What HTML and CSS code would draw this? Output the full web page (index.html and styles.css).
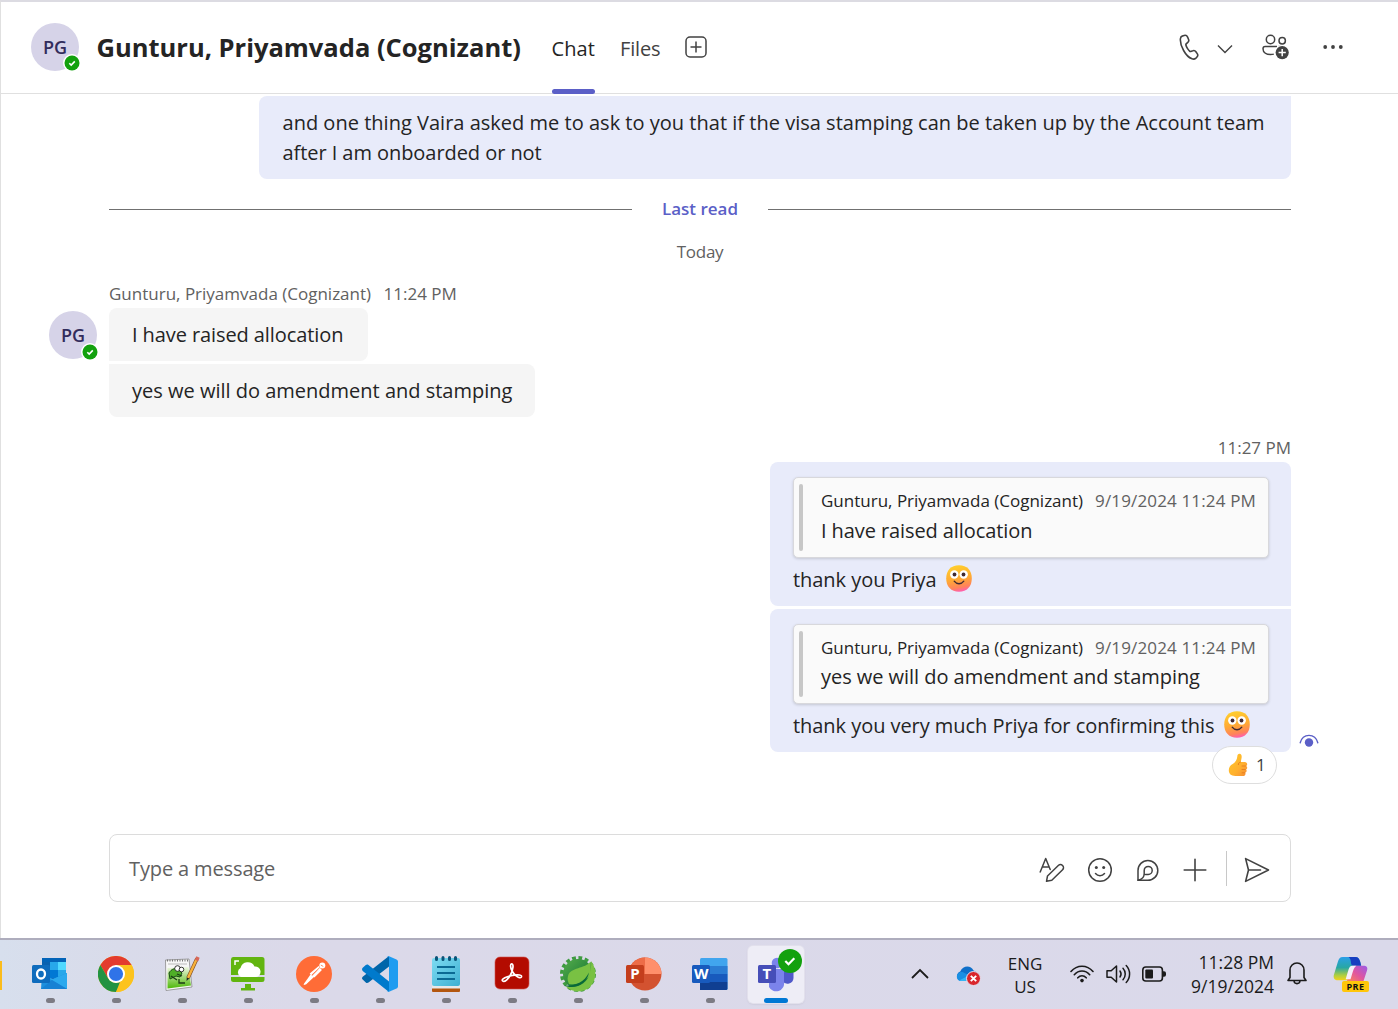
FILE: index.html
```
<!DOCTYPE html>
<html lang="en">
<head>
<meta charset="utf-8">
<title>Chat</title>
<link rel="stylesheet" href="styles.css">
</head>
<body>
<div class="screen">
  <header class="chat-header">
    <div class="avatar"><span class="initials">PG</span>
      <svg class="presence" viewBox="0 0 18 18"><circle cx="9" cy="9" r="9" fill="#fff"/><circle cx="9" cy="9" r="7.5" fill="#13a10e"/><path d="M6.3 9.2l1.9 1.9 3.6-3.7" fill="none" stroke="#fff" stroke-width="1.6"/></svg>
    </div>
    <h1 class="title"><span>Gunturu, Priyamvada (Cognizant)</span></h1>
    <nav class="tabs">
      <a class="tab active"><span>Chat</span></a>
      <a class="tab"><span>Files</span></a>
      <svg class="add-tab" viewBox="0 0 22 22" fill="none" stroke="#424242" stroke-width="1.5"><rect x="1" y="1" width="20" height="20" rx="4"/><path d="M11 5.5v11M5.5 11h11"/></svg>
    </nav>
    <div class="actions">
      <svg width="20" height="26" viewBox="0 0 20 26" fill="none" stroke="#424242" stroke-width="1.6" stroke-linejoin="round"><path d="M3.6 1.9l1.5-.5c1.500-.4 2.900.3 3.500 1.700l.9 2.100c.5 1.100.2 2.400-.7 3.200L7.200 9.900c-.3.3-.4.700-.3 1.100.3 1.300.8 2.300 1.500 3.400.7 1.100 1.300 1.900 2.200 2.700.3.3.7.4 1.100.3l2.200-.7c1.100-.4 2.300 0 3 1l1.300 1.900c.8 1.200.7 2.600-.4 3.600l-.9.9c-1 .9-2.500 1.200-3.900.7-3.200-1.200-6.100-4.100-8.400-8.300C2.100 12.200 1.100 8.200 1.400 4.800 1.500 3.300 2.300 2.200 3.600 1.900z"/></svg>
      <svg class="chev" width="16" height="10" viewBox="0 0 16 10" fill="none" stroke="#424242" stroke-width="1.4"><path d="M1 1.500l7 7 7-7"/></svg>
      <svg class="people" width="28" height="26" viewBox="0 0 28 26" fill="none" stroke="#424242" stroke-width="1.5"><circle cx="8.500" cy="5.500" r="4.200"/><circle cx="20.200" cy="6.700" r="3.200"/><path d="M15 12.500H3.200A2.200 2.200 0 0 0 1 14.700c0 4 3.600 5.800 7.500 5.800 1.200 0 2.300-.1 3.300-.4M16.500 12.500h4"/><circle cx="20.200" cy="18.600" r="7.500" fill="#fff" stroke="none"/><circle cx="20.200" cy="18.600" r="6.600" fill="#424242" stroke="none"/><path d="M20.200 15v7.200M16.600 18.600h7.200" stroke="#fff"/></svg>
      <svg class="more" width="20" height="4" viewBox="0 0 20 4" fill="#424242"><circle cx="2.200" cy="2" r="1.900"/><circle cx="10" cy="2" r="1.900"/><circle cx="17.800" cy="2" r="1.900"/></svg>
    </div>
  </header>

  <main class="messages">
    <div class="bubble mine first"><span class="l1">and one thing Vaira asked me to ask to you that if the visa stamping can be taken up by the Account team</span><br><span class="l2">after I am onboarded or not</span></div>
    <div class="last-read"><span>Last read</span></div>
    <div class="day"><span>Today</span></div>
    <div class="meta"><span class="name">Gunturu, Priyamvada (Cognizant)</span><span class="time">11:24 PM</span></div>
    <section class="incoming">
      <div class="avatar"><span class="initials">PG</span>
        <svg class="presence" viewBox="0 0 18 18"><circle cx="9" cy="9" r="9" fill="#fff"/><circle cx="9" cy="9" r="7.5" fill="#13a10e"/><path d="M6.3 9.2l1.9 1.9 3.6-3.7" fill="none" stroke="#fff" stroke-width="1.6"/></svg>
      </div>
      <div class="stack">
        <div class="bubble theirs top"><span class="short">I have raised allocation</span></div>
        <div class="bubble theirs bottom"><span>yes we will do amendment and stamping</span></div>
      </div>
    </section>
    <section class="outgoing">
      <div class="meta right"><span class="time">11:27 PM</span></div>
      <div class="bubble mine reply r1">
        <blockquote class="quote q1"><div class="qmeta"><span class="name">Gunturu, Priyamvada (Cognizant)</span><span class="date">9/19/2024 11:24 PM</span></div><div class="qtext"><span class="short">I have raised allocation</span></div></blockquote>
        <div class="rtext"><span>thank you Priya</span>
          <svg class="smile" viewBox="0 0 26 27"><defs><linearGradient id="face" x1="0.3" y1="0" x2="0.5" y2="1"><stop offset="0" stop-color="#ffd02c"/><stop offset=".55" stop-color="#ffa835"/><stop offset=".85" stop-color="#ff825c"/><stop offset="1" stop-color="#ff5fae"/></linearGradient></defs><path d="M13 .3C21 .3 25.800 5.500 25.800 13.500S21 26.700 13 26.700.2 21.500.2 13.500 5 .3 13 .3z" fill="url(#face)"/><circle cx="8.300" cy="9.500" r="4.200" fill="#fff"/><circle cx="17.700" cy="9.500" r="4.200" fill="#fff"/><circle cx="8.500" cy="9.500" r="1.900" fill="#402a32"/><circle cx="17.500" cy="9.500" r="1.900" fill="#402a32"/><path d="M8.200 16.200c2.500 3.300 7.100 3.300 9.600 0" fill="none" stroke="#402a32" stroke-width="1.4" stroke-linecap="round"/></svg>
        </div>
      </div>
      <div class="bubble mine reply r2">
        <blockquote class="quote q2"><div class="qmeta"><span class="name">Gunturu, Priyamvada (Cognizant)</span><span class="date">9/19/2024 11:24 PM</span></div><div class="qtext"><span>yes we will do amendment and stamping</span></div></blockquote>
        <div class="rtext"><span>thank you very much Priya for confirming this</span>
          <svg class="smile" viewBox="0 0 26 27"><path d="M13 .3C21 .3 25.800 5.500 25.800 13.500S21 26.700 13 26.700.2 21.500.2 13.500 5 .3 13 .3z" fill="url(#face)"/><circle cx="8.300" cy="9.500" r="4.200" fill="#fff"/><circle cx="17.700" cy="9.500" r="4.200" fill="#fff"/><circle cx="8.500" cy="9.500" r="1.900" fill="#402a32"/><circle cx="17.500" cy="9.500" r="1.900" fill="#402a32"/><path d="M8.200 16.200c2.500 3.300 7.100 3.300 9.600 0" fill="none" stroke="#402a32" stroke-width="1.4" stroke-linecap="round"/></svg>
        </div>
        <div class="reaction">
          <svg width="20" height="24" viewBox="0 0 20 24"><defs><linearGradient id="thumb" x1="0" y1="0" x2="1" y2="1"><stop offset="0" stop-color="#ffc928"/><stop offset=".6" stop-color="#ffb02e"/><stop offset="1" stop-color="#f58b35"/></linearGradient></defs><path d="M11.600.7c1.800.2 2.300 2 2 4L12.800 9h4c3 .3 2.800 3.600 1.400 4 1.500.8 1.300 3-.2 3.500 1.100.8.7 2.900-.7 3.200.7 1.300-.2 3.300-2.200 3.300H7.300C3 23 .8 20.800.8 17.300c0-3 1.500-4.900 3.900-6.200C7.500 9.300 9 6.800 9.300 3.500 9.400 1.500 10.200.6 11.600.7z" fill="url(#thumb)"/><path d="M17.900 13h-4.300M17.600 16.500h-4M17 19.800h-3.300M12.800 9c-1.800.3-2.600 1.500-2.400 3" fill="none" stroke="#e8811f" stroke-width="1"/></svg>
          <span>1</span>
        </div>
        <svg class="seen" viewBox="0 0 20 13"><path d="M1.200 8.800C2.500 4 6 1.400 10 1.400s7.500 2.600 8.800 7.400" fill="none" stroke="#5b5fc7" stroke-width="1.4" stroke-linecap="round"/><circle cx="10" cy="8.500" r="4.200" fill="#5b5fc7"/></svg>
      </div>
    </section>
    <div class="compose">
      <span class="placeholder">Type a message</span>
      <div class="tools">
        <svg class="format" width="26" height="26" viewBox="0 0 26 26" fill="none" stroke="#424242" stroke-width="1.5" stroke-linejoin="round" stroke-linecap="round"><path d="M1.200 15L6.700 1.500l4.500 11M3.400 10h6.800"/><path d="M7.500 24.300l1-5.300L19.300 8.500a3 3 0 0 1 4.300 4.300L12.800 23.300z"/></svg>
        <svg width="26" height="26" viewBox="0 0 26 26" fill="none" stroke="#424242" stroke-width="1.5" stroke-linecap="round"><circle cx="13" cy="13" r="11.300"/><circle cx="9.300" cy="10.600" r="1.500" fill="#424242" stroke="none"/><circle cx="16.700" cy="10.600" r="1.500" fill="#424242" stroke="none"/><path d="M8.500 16.500c2.400 2.900 6.600 2.900 9 0"/></svg>
        <svg width="24" height="24" viewBox="0 0 24 24" fill="none" stroke="#424242" stroke-width="1.5" stroke-linejoin="round" stroke-linecap="round"><path d="M2 22.300V12.400A9.900 9.900 0 1 1 11.900 22.300z"/><path d="M2 22.300c3.500-.8 6.200-3 6.200-6.600v-3.300a4 4 0 1 1 4 4H9.500"/></svg>
        <svg width="24" height="24" viewBox="0 0 24 24" fill="none" stroke="#424242" stroke-width="1.6" stroke-linecap="round"><path d="M12 1.200v21.600M1.200 12h21.600"/></svg>
        <i class="divider"></i>
        <svg width="26" height="26" viewBox="0 0 26 26" fill="none" stroke="#424242" stroke-width="1.6" stroke-linejoin="round" stroke-linecap="round"><path d="M1.600 1.600L24.500 13 1.600 24.400 4.500 13zM4.500 13h12"/></svg>
      </div>
    </div>
  </main>

  <footer class="taskbar">
    <i class="sliver"></i>
    <div class="apps">
      <div class="app"><svg viewBox="0 0 36 36"><path d="M10 2h24v28H10z" fill="#1066b5"/><path d="M10 6h8v8h-8z" fill="#0a62b0"/><path d="M18 6h8v8h-8z" fill="#28a8ea"/><path d="M26 6h8v8h-8z" fill="#50d9ff"/><path d="M10 14h8v8h-8z" fill="#0a4c90"/><path d="M18 14h8v8h-8z" fill="#0078d4"/><path d="M26 14h8v8h-8z" fill="#28a8ea"/><path d="M10 2h24v4H10z" fill="#0364b8"/><path d="M35 17v16H9l1-15 11 5z" fill="#1e8fdd"/><path d="M35 17v16L16 22l5 1z" fill="#2ba9ee"/><path d="M9 33h26L20 24z" fill="#1781d4"/><rect y="9" width="18" height="18" rx="1.5" fill="#0f6cbd"/><ellipse cx="9" cy="18" rx="4" ry="4.500" fill="none" stroke="#fff" stroke-width="2.3"/></svg><i class="dot"></i></div>
      <div class="app"><svg viewBox="0 0 36 36"><circle cx="18" cy="18" r="18" fill="#fcc31e"/><path d="M2.400 9a18 18 0 0 1 31.200 0H18l-7.800 13.500z" fill="#e33b2e"/><path d="M2.400 9l7.800 13.500A9 9 0 0 0 22 26l-4 10A18 18 0 0 1 2.400 9z" fill="#229342"/><path d="M25.800 22.500A9 9 0 0 0 25.800 13.500L18 9h15.600A18 18 0 0 1 18 36z" fill="#fcc31e"/><circle cx="18" cy="18" r="9" fill="#fff"/><circle cx="18" cy="18" r="7.100" fill="#2f73e8"/></svg><i class="dot"></i></div>
      <div class="app"><svg viewBox="0 0 36 36"><defs><linearGradient id="npp" x1="0" y1="0" x2="0" y2="1"><stop offset="0" stop-color="#eef7df"/><stop offset="1" stop-color="#4fb80a"/></linearGradient></defs><path d="M1.500 4L25 3l3 28-26 3.500z" fill="#f7f7f7" stroke="#8a8a8a" stroke-width=".8"/><path d="M3.500 12l21-1 2.500 18.500-23.500 3z" fill="url(#npp)"/><path d="M3 4.500h21" stroke="#777" stroke-width="2" stroke-dasharray="1 1.500"/><path d="M4 8h19" stroke="#bbb" stroke-width="1"/><path d="M5 17c2-4 7-6 10-3l3 3-2 4-4-1-6 3z" fill="#4fae27" stroke="#174a12" stroke-width="1"/><circle cx="13.500" cy="12.500" r="2.800" fill="#fff" stroke="#222" stroke-width=".9"/><circle cx="17.500" cy="13.500" r="2.300" fill="#fff" stroke="#222" stroke-width=".9"/><path d="M7 20l6 4M13 18l5 2M15 23v4h6" fill="none" stroke="#1c3b15" stroke-width="1.3"/><path d="M33 2.500L24 22" stroke="#7e4b22" stroke-width="3.600"/><path d="M32.700 3L24 22" stroke="#f7b13b" stroke-width="2.400"/><path d="M34 1l-1.500 3.500" stroke="#d86758" stroke-width="3.600"/><path d="M22.500 25l.3-3.500 2.500 1z" fill="#222"/></svg><i class="dot"></i></div>
      <div class="app"><svg viewBox="0 0 36 36"><path d="M3 1h29a2.500 2.500 0 0 1 2.500 2.500V19H1V3.500A2.500 2.500 0 0 1 3 1zM1 21h33.500v2.500A2.500 2.500 0 0 1 32 26H3.500A2.500 2.500 0 0 1 1 23.500zM15 28h6v4h4v2.500H11V32h4z" fill="#62b510"/><path d="M11 21a5 5 0 0 1-.5-9 7.500 7.500 0 0 1 14-1.500A5.300 5.300 0 0 1 26 21z" fill="#fff"/><path d="M5 9V5h4" fill="none" stroke="#fff" stroke-width="1.5"/></svg><i class="dot"></i></div>
      <div class="app"><svg viewBox="0 0 36 36"><circle cx="18" cy="18" r="18" fill="#ff6c37"/><circle cx="26.300" cy="9.600" r="3" fill="#fff"/><path d="M24.500 13.500l-8 7.500-7.500 7" stroke="#fff" stroke-width="2" fill="none"/><path d="M23.500 11l-9 7.500M25 13l-7.500 7.500" stroke="#fff" stroke-width="2.600" fill="none"/><path d="M23.800 11.500l-8.300 7.800M24.800 9l2.500 1.500" stroke="#ff6c37" stroke-width=".8"/><path d="M14.500 18.500l3 2L8.500 29l-1-.5z" fill="#fff"/></svg><i class="dot"></i></div>
      <div class="app"><svg viewBox="0 0 36 36"><path d="M27 0v10.500L6.500 26.500c-1 .7-2 .6-2.700-.1L.7 23.600c-.9-.9-.9-2 0-2.900z" fill="#0065a9"/><path d="M.7 11.800l3.100-2.700c.7-.7 1.700-.8 2.700-.1L27 25.500V36L.7 14.900c-.9-.9-.9-2.200 0-3.100z" fill="#007acc"/><path d="M26.500 0l8 3.500c1 .5 1.500 1.200 1.500 2.300v24.400c0 1.100-.5 1.800-1.500 2.300l-8 3.500c-1.100.2-1.800-.2-2.300-.6 1.500.8 2.800 0 2.800-1.600V2.200c0-1.600-1.300-2.400-2.800-1.600.5-.4 1.200-.8 2.300-.6z" fill="#1f9cf0"/></svg><i class="dot"></i></div>
      <div class="app"><svg viewBox="0 0 36 36"><defs><linearGradient id="pad" x1="0" y1="0" x2="1" y2="1"><stop offset="0" stop-color="#7ddcf2"/><stop offset="1" stop-color="#3fb0d2"/></linearGradient></defs><path d="M4 32h28v3a1 1 0 0 1-1 1H5a1 1 0 0 1-1-1z" fill="#b3560f"/><path d="M4 28h28v4.500H4z" fill="#e9e9e9"/><path d="M6 2h24a2 2 0 0 1 2 2v24a2 2 0 0 1-2 2H6a2 2 0 0 1-2-2V4a2 2 0 0 1 2-2z" fill="url(#pad)"/><path d="M9 11h18M9 17h18M9 23h18" stroke="#0b6a94" stroke-width="2"/><path d="M8.500 1.500v2M15 1.500v2M21.500 1.500v2M27.500 1.500v2" stroke="#0b5478" stroke-width="3" stroke-linecap="round"/></svg><i class="dot"></i></div>
      <div class="app"><svg viewBox="0 0 36 36"><rect x="1" y="1" width="34" height="32" rx="5" fill="#b30b00" stroke="#d2554d" stroke-width=".6"/><path d="M8.500 24.800c-1.500-1.800 4.500-4.500 10-5.500 6-1 10-.3 8.800 1.800-1.500 2.300-7.300-2.100-9.300-6.100-1.700-3.600-2-7-.3-7.100 2.300-.1 1.300 6.100-1 10.600-2.300 4.300-6.200 8.500-8.200 6.300z" fill="none" stroke="#fff" stroke-width="1.7"/></svg><i class="dot"></i></div>
      <div class="app"><svg viewBox="0 0 36 36"><defs><linearGradient id="leaf" x1="0" y1="0" x2="1" y2="1"><stop offset="0" stop-color="#55ad4b"/><stop offset="1" stop-color="#08692f"/></linearGradient></defs><circle cx="18" cy="18" r="16" fill="none" stroke="#3f9b41" stroke-width="4" stroke-dasharray="3.7 2.58"/><circle cx="18" cy="18" r="15" fill="url(#leaf)"/><path d="M31 5C37 13 37 24 30 31 23 37 12 37 5 30c12 3 22-2 25-13 1-4 1.500-8 1-12z" fill="#79c143"/><path d="M30.500 5.500c-5 7.500-20.500 5.500-22.500 14.500-1 3 0 6 1 8 9 1 15-1 22-10z" fill="#79c143"/><path d="M4.500 29.500C14 30 24 27 29 16.500 27 28 15 34 4.500 29.500z" fill="#08693a"/></svg><i class="dot"></i></div>
      <div class="app"><svg viewBox="0 0 36 36"><circle cx="19" cy="18" r="16.500" fill="#d35230"/><path d="M19 1.500A16.500 16.500 0 0 1 35.500 18H19z" fill="#ff8f6b"/><path d="M19 1.500V18H2.500A16.500 16.500 0 0 1 19 1.500z" fill="#ed6c47"/><rect y="9" width="18" height="18" rx="1.5" fill="#c43e1c"/><text x="4.300" y="23" class="glyph">P</text></svg><i class="dot"></i></div>
      <div class="app"><svg viewBox="0 0 36 36"><rect x="8" y="2" width="27.500" height="32" rx="1.5" fill="#41a5ee"/><path d="M8 10h27.500v8H8z" fill="#2b7cd3"/><path d="M8 18h27.500v8H8z" fill="#185abd"/><path d="M8 26h27.500v6.500a1.500 1.500 0 0 1-1.500 1.500H8z" fill="#103f91"/><rect y="9" width="18" height="18" rx="1.5" fill="#185abd"/><text x="2" y="23" class="glyph">W</text></svg><i class="dot"></i></div>
      <div class="app current"><svg viewBox="0 0 36 36"><circle cx="19" cy="7" r="5.300" fill="#7b83eb"/><path d="M24 13h11.500v9a6 6 0 0 1-11 3z" fill="#5059c9"/><path d="M11 13h15v13a8 8 0 0 1-15 5z" fill="#7b83eb"/><rect y="9" width="18" height="18" rx="1.5" fill="#464eb8"/><text x="4.500" y="23" class="glyph">T</text></svg><i class="dot"></i>
        <svg class="badge" viewBox="0 0 24 24"><circle cx="12" cy="12" r="12" fill="#13a10e"/><path d="M7.300 12l3.200 3.200 5.800-6" fill="none" stroke="#fff" stroke-width="2.2"/></svg></div>
    </div>
    <div class="tray">
      <svg class="up" width="18" height="11" viewBox="0 0 18 11" fill="none" stroke="#1b1b1b" stroke-width="1.8"><path d="M1 10l8-8 8 8"/></svg>
      <svg class="cloud" width="25" height="21" viewBox="0 0 25 21"><path d="M5 16a5 5 0 0 1-.8-9.500C7 0 15 0 17.500 5.500 20 6 22 8 22 11v5z" fill="#0f6fc9"/><path d="M1 13c-1-4 3-7 6.500-5.500L17 12l-5 4H5c-2 0-3.500-1-4-3z" fill="#1a8fe3"/><path d="M3 15.500L12 11l3 5H5z" fill="#35b5f5"/><circle cx="17.500" cy="13.500" r="7" fill="#d9262c" stroke="#e4e0ef" stroke-width="1"/><path d="M14.800 10.800l5.400 5.400m0-5.400l-5.400 5.400" stroke="#fff" stroke-width="1.9"/></svg>
      <div class="lang"><span>ENG</span><span>US</span></div>
      <svg class="wifi" width="24" height="18" viewBox="0 0 24 18" fill="none" stroke="#1b1b1b" stroke-width="1.6" stroke-linecap="round"><path d="M1 6.500C7-.6 17-.6 23 6.500M4.300 9.700c4.300-5 11.100-5 15.400 0M7.800 12.800c2.400-2.700 6-2.700 8.400 0"/><circle cx="12" cy="15.600" r="1.800" fill="#1b1b1b" stroke="none"/></svg>
      <svg class="vol" width="25" height="20" viewBox="0 0 25 20" fill="none" stroke="#1b1b1b" stroke-width="1.5" stroke-linejoin="round" stroke-linecap="round"><path d="M1 6.800h4.200L10.500 2v16l-5.300-4.800H1zM14 7c1.300 1.800 1.300 4.200 0 6M17 4.200c3 3.300 3 8.300 0 11.600M20.200 1.500c4.500 4.800 4.500 12.200 0 17"/></svg>
      <svg class="batt" width="24" height="16" viewBox="0 0 24 16"><rect x=".8" y="1" width="19.600" height="14" rx="3" fill="none" stroke="#1b1b1b" stroke-width="1.6"/><rect x="3.300" y="3.500" width="7.700" height="9" rx="1" fill="#1b1b1b"/><path d="M21 5.300h1a2 2 0 0 1 2 2v1.400a2 2 0 0 1-2 2h-1z" fill="#1b1b1b"/></svg>
      <div class="clock"><span>11:28 PM</span><span>9/19/2024</span></div>
      <svg class="bell" width="20" height="23" viewBox="0 0 20 23" fill="none" stroke="#1b1b1b" stroke-width="1.6" stroke-linejoin="round"><path d="M3 15.500V8a7 7 0 0 1 14 0v7.500l2 3H1zM7 19c.5 3.500 5.500 3.500 6 0"/></svg>
      <div class="copilot"><svg viewBox="0 0 36 34"><defs><linearGradient id="cpa" x1="0" y1="0" x2="0" y2="1"><stop offset="0" stop-color="#2b9fe8"/><stop offset=".45" stop-color="#27a7a5"/><stop offset=".8" stop-color="#b3cf3d"/><stop offset="1" stop-color="#f2d21c"/></linearGradient><linearGradient id="cpb" x1="1" y1="0" x2="0" y2="1"><stop offset="0" stop-color="#9a5be8"/><stop offset=".5" stop-color="#e0569f"/><stop offset="1" stop-color="#ff8a4f"/></linearGradient></defs><path d="M10 1h13c3 0 4 2 5 5l1 4h-9L15 25H5c-4 0-5-3-4-6L5 6c1-3 2-5 5-5z" fill="url(#cpa)"/><path d="M19 1h4c3 0 4 2 5 5l1 4h-8c-4 0-1-6-5-9z" fill="#173fc0"/><path d="M21 10h10c4 0 5 2 4 5l-4 12H14l3-10c1-4 2-6 4-7z" fill="url(#cpb)"/><path d="M20 10h4c-3 2-4 8-6 14h-5l3-10c1-3 2-4 4-4z" fill="#f6eefa"/></svg><b>PRE</b></div>
    </div>
  </footer>
</div>
</body>
</html>
```
FILE: styles.css
```
* { box-sizing: border-box; }
body { margin: 0; background: #fff; color: #242424; font: 20px/30px "Open Sans", "Segoe UI", sans-serif; }
svg { display: block; flex: none; }
h1, blockquote { margin: 0; }
span { white-space: nowrap; }

.screen { display: flex; flex-direction: column; width: 1398px; height: 1009px; overflow: hidden; }
.chat-header { display: flex; align-items: center; height: 94px; flex: none; padding: 0 0 2px 30px; border-top: 2px solid #dcdbe2; border-bottom: 1px solid #e0e0e0; border-left: 1px solid #e0e0e0; }

.avatar { position: relative; flex: none; width: 48px; height: 48px; border-radius: 50%; background: #d6d3e8; color: #322c5c; display: flex; align-items: center; justify-content: center; font-weight: 600; font-size: 18px; }
.presence { position: absolute; right: -1.5px; bottom: -1.5px; width: 18px; height: 18px; }
.title { margin-left: 17.5px; width: 455px; font-size: 25.5px; line-height: 36px; font-weight: 700; }
.tabs { display: flex; align-items: center; height: 91px; gap: 25px; }
.tab { display: flex; align-items: center; height: 93px; margin-top: 2px; padding-top: 3px; color: #424242; }
.tab span { letter-spacing: -.15px; }
.tab.active { color: #242424; position: relative; }
.tab.active span { letter-spacing: .1px; }
.tab.active::after { content: ""; position: absolute; left: 0; right: 0; bottom: 0; height: 5px; border-radius: 3px; background: #5b5fc7; }
.add-tab { width: 22px; height: 22px; }
.actions { display: flex; align-items: center; margin-left: auto; padding-right: 55px; }
.chev { margin: 5px 0 0 18px; }
.people { margin: 0 0 0 29px; }
.more { margin-left: 33px; }

.messages { display: flex; flex-direction: column; height: 844px; padding: 2px 107px 0 108px; border-left: 1px solid #e0e0e0; }
.bubble { border-radius: 8px; padding: 12px 23px 11px; }
.mine { background: #e8ebfa; }
.first { align-self: flex-end; width: 1032px; height: 83px; padding-left: 23.5px; border-top-right-radius: 0; }
.l1 { letter-spacing: .015px; }
.l2 { letter-spacing: -.06px; }
.short { letter-spacing: -.09px; }
.last-read { display: flex; align-items: center; gap: 30px; height: 30px; margin-top: 15px; color: #5b5fc7; font-size: 17px; font-weight: 600; }
.last-read::before, .last-read::after { content: ""; flex: 1; height: 1px; background: #707070; }
.day { height: 30px; margin-top: 13px; text-align: center; color: #616161; font-size: 17px; letter-spacing: -.25px; }
.meta { display: flex; gap: 12.5px; height: 30px; margin-top: 12px; color: #616161; font-size: 17px; }
.incoming { display: flex; gap: 12px; margin: -1px 0 0 -60px; }
.incoming .avatar { margin-top: 3px; }
.stack { display: flex; flex-direction: column; align-items: flex-start; gap: 3px; }
.theirs { background: #f5f5f5; height: 53px; }
.top { width: 259px; border-bottom-left-radius: 0; }
.bottom { width: 426px; border-top-left-radius: 0; }
.outgoing { display: flex; flex-direction: column; align-items: flex-end; }
.outgoing .meta { margin-top: 16px; }
.reply { width: 521px; padding: 15px 23px 0; position: relative; }
.r1 { height: 144px; margin-top: -1px; border-bottom-right-radius: 0; }
.r2 { height: 143px; margin-top: 3px; border-top-right-radius: 0; }
.quote { position: relative; width: 476px; padding: 9px 0 0 27px; background: #fafafa; border: 1px solid #d8d8dc; border-radius: 5px; box-shadow: 0 1px 3px rgba(0,0,0,.16); }
.quote::before { content: ""; position: absolute; left: 5px; top: 6px; bottom: 6px; width: 4px; border-radius: 2px; background: #c7c7c7; }
.q1 { height: 81px; }
.q2 { height: 80px; }
.qmeta { display: flex; gap: 12px; height: 30px; line-height: 28px; font-size: 17px; }
.qmeta .date { color: #616161; letter-spacing: .15px; }
.qtext { line-height: 28px; letter-spacing: -.04px; }
.q2 .qtext { margin-top: -1px; }
.rtext { display: flex; align-items: center; gap: 9px; margin-top: 7px; letter-spacing: -.05px; }
.smile { width: 26px; height: 27px; margin-top: -4px; }
.reaction { position: absolute; right: 14px; bottom: -32px; width: 65px; height: 38px; border: 1px solid #dedede; border-radius: 19px; background: #fff; display: flex; align-items: center; padding-left: 15px; gap: 8px; font-size: 17px; color: #424242; }
.seen { position: absolute; right: -28px; bottom: 5px; width: 20px; height: 13px; }

.compose { display: flex; align-items: center; justify-content: space-between; height: 68px; margin-top: 82px; padding: 0 20px 0 19px; border: 1px solid #dcdcdc; border-radius: 8px; }
.placeholder { color: #616161; letter-spacing: -.13px; padding-top: 2px; }
.tools { display: flex; align-items: center; gap: 23px; padding-top: 3px; }
.format { margin-right: -1px; }
.divider { width: 1px; height: 35px; background: #c8c8c8; margin: -3px -6px 0 -4px; }

.taskbar { display: flex; flex: none; height: 71px; border-top: 2px solid #aeadbd; background: linear-gradient(90deg, #d7dfed 0, #d9dbea 120px, #dbd9e9 300px, #dad9ea 1398px); }
.sliver { width: 2px; height: 29px; margin-top: 21px; background: #fbbc1c; }
.apps { display: flex; gap: 10px; padding: 6px 0 0 20px; }
.app { position: relative; width: 56px; height: 57px; border-radius: 5px; display: flex; flex-direction: column; align-items: center; padding-top: 10px; }
.app svg { width: 36px; height: 36px; }
.dot { width: 9px; height: 5px; border-radius: 3px; margin-top: 6px; background: #7c7b84; }
.current { background: #eeedf6; box-shadow: 0 0 0 1px #e2e0ec, 0 1px 2px #b8b6c6; }
.current .dot { width: 24px; background: #0078d4; }
.app .badge { position: absolute; left: 30px; top: 3px; width: 24px; height: 24px; }
.glyph { font: 700 15px "Open Sans", sans-serif; fill: #fff; }
.tray { display: flex; align-items: center; height: 67px; margin-left: auto; color: #1b1b1b; font-size: 17px; line-height: 23px; }
.cloud { margin: 3px 0 0 27px; }
.lang { display: flex; flex-direction: column; align-items: center; width: 40px; margin: 2px 0 0 24px; }
.wifi { margin-left: 25px; }
.vol { margin-left: 12px; }
.batt { margin-left: 11px; }
.clock { display: flex; flex-direction: column; align-items: flex-end; width: 90px; margin-left: 18px; line-height: 24px; font-size: 17.5px; }
.bell { margin-left: 13px; }
.copilot { position: relative; width: 36px; height: 36px; margin: 0 29px 0 26px; }
.copilot svg { width: 35px; height: 33px; }
.copilot b { position: absolute; left: 9px; top: 25px; width: 27px; height: 11px; border-radius: 2px; background: #ffc60a; font-size: 9px; line-height: 11px; text-align: center; letter-spacing: .5px; color: #111; }
```
